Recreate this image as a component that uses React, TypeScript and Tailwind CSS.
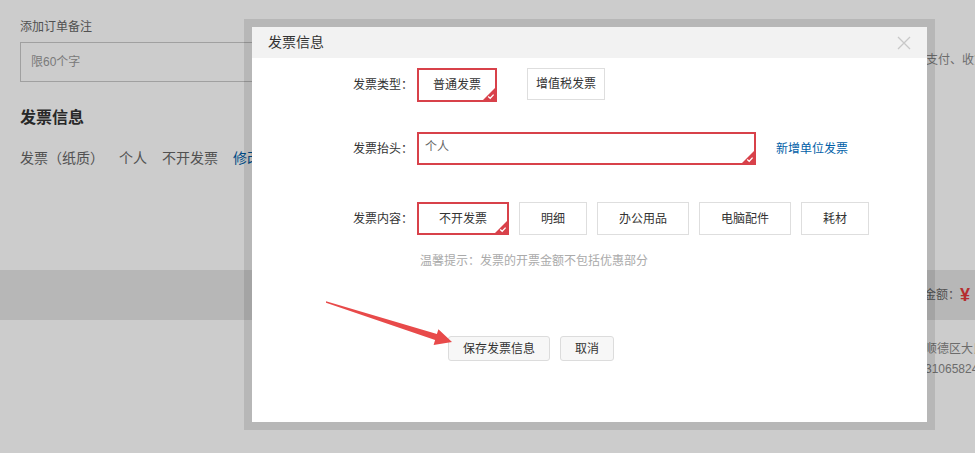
import React from "react";

const Badge = () => (
  <svg className="absolute right-0 bottom-0" width="12" height="12" viewBox="0 0 12 12">
    <polygon points="12,0 12,12 0,12" fill="#d8414a" />
    <polyline points="5.2,8.6 7.2,10.3 10.6,6.6" fill="none" stroke="#fff" strokeWidth="1.3" />
  </svg>
);

const Opt = ({ label, w, selected, h = "h-[33px]" }: { label: string; w: string; selected?: boolean; h?: string }) => (
  <div
    className={
      selected
        ? `relative ${w} ${h} border-2 border-[#d8414a] flex items-center justify-center text-[12px] text-[#333]`
        : `relative ${w} ${h} border border-[#dedede] flex items-center justify-center text-[12px] text-[#333]`
    }
  >
    {label}
    {selected ? <Badge /> : null}
  </div>
);

export default function App() {
  return (
    <div className="relative w-[975px] h-[453px] overflow-hidden bg-white font-['Liberation_Sans','Noto_Sans_CJK_SC',sans-serif]">
      {/* page behind */}
      <div className="flex flex-col h-full">
        <div className="flex h-[270px]">
          <div className="w-[922px] shrink-0 pl-[20px]">
            <div className="pt-[19px] text-[12px] leading-[16px] text-[#666]">添加订单备注</div>
            <div className="mt-[7px] h-[40px] w-[600px] border border-[#c9c9c9] flex items-center pl-[10px] text-[12px] text-[#999]">
              限60个字
            </div>
            <div className="mt-[25px] text-[16px] font-bold leading-[22px] text-[#333]">发票信息</div>
            <div className="mt-[19px] flex gap-[15px] text-[14px] leading-[20px] text-[#666]">
              <span>发票（纸质）</span>
              <span>个人</span>
              <span>不开发票</span>
              <span className="text-[#005ea7]">修改</span>
            </div>
          </div>
          <div className="pt-[52px] pl-[4px] whitespace-nowrap text-[12px] leading-[16px] text-[#888]">支付、收货</div>
        </div>
        <div className="h-[50px] bg-[#e5e5e5] flex items-center">
          <div className="w-[924px] shrink-0" />
          <div className="flex items-center whitespace-nowrap text-[12px] text-[#666]">
            金额：<span className="text-[18px] font-bold text-[#e4393c]">¥</span>
          </div>
        </div>
        <div className="flex pt-[19px]">
          <div className="w-[925px] shrink-0" />
          <div className="whitespace-nowrap text-[12px] leading-[20px] text-[#888]">
            <div>顺德区大良街道</div>
            <div>31065824</div>
          </div>
        </div>
      </div>

      {/* overlay */}
      <div className="absolute inset-0 bg-black/20" />

      {/* modal */}
      <div className="absolute left-[244px] top-[19px] w-[691px] h-[411px] border-[8px] border-black/10 bg-clip-padding">
        <div className="h-full bg-white flex flex-col">
          <div className="h-[31px] bg-[#f2f2f2] flex items-center justify-between pl-[16px] pr-[16px]">
            <span className="text-[14px] text-[#333]">发票信息</span>
            <svg width="14" height="14" viewBox="0 0 14 14">
              <path d="M1 1 L13 13 M13 1 L1 13" stroke="#c8c8c8" strokeWidth="1.3" fill="none" />
            </svg>
          </div>
          <div className="flex flex-col pt-[10px]">
            <div className="flex items-start">
              <div className="w-[165px] h-[34px] flex items-center justify-end pr-[4px] text-[12px] text-[#333]">发票类型：</div>
              <Opt label="普通发票" w="w-[80px]" h="h-[34px]" selected />
              <div className="ml-[30px]">
                <Opt label="增值税发票" w="w-[78px]" h="h-[32px]" />
              </div>
            </div>
            <div className="flex items-center mt-[30px]">
              <div className="w-[165px] flex justify-end pr-[4px] text-[12px] text-[#333]">发票抬头：</div>
              <div className="relative w-[339px] h-[33px] border-2 border-[#d8414a] pl-[6px] pt-[5px] text-[12px] leading-[16px] text-[#666]">
                个人
                <Badge />
              </div>
              <span className="ml-[20px] text-[12px] text-[#005ea7]">新增单位发票</span>
            </div>
            <div className="flex items-center mt-[37px]">
              <div className="w-[165px] flex justify-end pr-[4px] text-[12px] text-[#333]">发票内容：</div>
              <div className="flex gap-[10px]">
                <Opt label="不开发票" w="w-[92px]" selected />
                <Opt label="明细" w="w-[68px]" />
                <Opt label="办公用品" w="w-[92px]" />
                <Opt label="电脑配件" w="w-[92px]" />
                <Opt label="耗材" w="w-[68px]" />
              </div>
            </div>
            <div className="mt-[17px] pl-[168px] text-[12px] leading-[18px] text-[#aaa]">温馨提示：发票的开票金额不包括优惠部分</div>
            <div className="mt-[66px] pl-[196px] flex gap-[10px]">
              <div className="h-[25px] px-[14px] flex items-center border border-[#dcdcdc] rounded-[3px] bg-[#f7f7f7] text-[12px] text-[#333]">保存发票信息</div>
              <div className="h-[25px] px-[14px] flex items-center border border-[#dcdcdc] rounded-[3px] bg-[#f7f7f7] text-[12px] text-[#333]">取消</div>
            </div>
          </div>
        </div>
      </div>

      {/* annotation arrow */}
      <svg className="absolute left-0 top-0 pointer-events-none" width="975" height="453" viewBox="0 0 975 453">
        <polygon
          points="326,301.3 436.9,334.1 438.4,329.2 452,342 433.6,345 435.1,339.9 326,302.7"
          fill="#e84a4a"
        />
      </svg>
    </div>
  );
}
